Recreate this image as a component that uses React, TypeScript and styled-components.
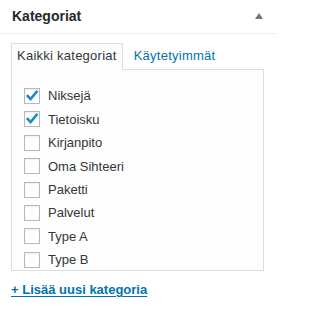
import React from "react";
import styled, { createGlobalStyle } from "styled-components";

const Global = createGlobalStyle`
  html, body { margin: 0; padding: 0; background: #fff; }
  body { font-family: "Liberation Sans", Arial, sans-serif; font-size: 13px; color: #32373c; }
  * { box-sizing: border-box; }
`;

const Box = styled.div`
  width: 276px;
  background: #fff;
`;

const Header = styled.div`
  height: 34px;
  border-bottom: 1px solid #eee;
  display: flex;
  align-items: center;
  justify-content: space-between;
  padding: 0 13px 0 12px;
`;

const Title = styled.h2`
  margin: 0;
  font-size: 14px;
  font-weight: 700;
  line-height: 33px;
  color: #23282d;
`;

const Toggle = styled.svg`
  display: block;
  margin-top: -1px;
`;

const Inside = styled.div`
  padding: 9px 12px 0 11px;
`;

const Tabs = styled.ul`
  display: flex;
  margin: 0;
  padding: 0;
  list-style: none;
`;

const Tab = styled.li<{ $active?: boolean }>`
  position: relative;
  z-index: 1;
  line-height: 17px;
  margin-bottom: -1px;
  padding: ${(p) => (p.$active ? "3px 5px 5px" : "4px 5px 6px")};
  margin-left: ${(p) => (p.$active ? "0" : "6px")};
  border: ${(p) => (p.$active ? "1px solid #ddd" : "none")};
  border-bottom-color: ${(p) => (p.$active ? "#fdfdfd" : "transparent")};
  background: ${(p) => (p.$active ? "#fdfdfd" : "transparent")};
  color: ${(p) => (p.$active ? "#32373c" : "#0073aa")};
  letter-spacing: 0.25px;
`;

const Panel = styled.div`
  height: 202px;
  border: 1px solid #ddd;
  background: #fdfdfd;
  overflow: hidden;
  padding: 0 12px;
`;

const List = styled.ul`
  margin: 0;
  padding: 14.3px 0 0;
  list-style: none;
`;

const Item = styled.li`
  height: 23.4px;
  display: flex;
  align-items: center;
  color: #32373c;
`;

const Check = styled.span`
  width: 16px;
  height: 16px;
  flex: none;
  border: 1px solid #b4b9be;
  background: #fff;
  box-shadow: inset 0 1px 2px rgba(0, 0, 0, 0.07);
  margin-right: 8px;
  position: relative;
`;

const Mark = styled.svg`
  position: absolute;
  left: -1px;
  top: -1px;
`;

const AddLink = styled.a`
  display: inline-block;
  margin-top: 10px;
  font-weight: 700;
  line-height: 18px;
  color: #0073aa;
  text-decoration: underline;
  text-underline-offset: 2px;
`;

const items: [string, boolean][] = [
  ["Niksejä", true],
  ["Tietoisku", true],
  ["Kirjanpito", false],
  ["Oma Sihteeri", false],
  ["Paketti", false],
  ["Palvelut", false],
  ["Type A", false],
  ["Type B", false],
];

export default function App() {
  return (
    <>
      <Global />
      <Box>
        <Header>
          <Title>Kategoriat</Title>
          <Toggle width="8" height="6" viewBox="0 0 8 6">
            <polygon points="4,0 8,6 0,6" fill="#72777c" />
          </Toggle>
        </Header>
        <Inside>
          <Tabs>
            <Tab $active>Kaikki kategoriat</Tab>
            <Tab>Käytetyimmät</Tab>
          </Tabs>
          <Panel>
            <List>
              {items.map(([name, checked]) => (
                <Item key={name}>
                  <Check>
                    {checked && (
                      <Mark width="16" height="16" viewBox="0 0 16 16">
                        <polyline
                          points="2.8,7.2 6.6,11 13.4,2.8"
                          fill="none"
                          stroke="#1e8cbe"
                          strokeWidth="2.6"
                        />
                      </Mark>
                    )}
                  </Check>
                  {name}
                </Item>
              ))}
            </List>
          </Panel>
          <AddLink href="#">+ Lisää uusi kategoria</AddLink>
        </Inside>
      </Box>
    </>
  );
}
